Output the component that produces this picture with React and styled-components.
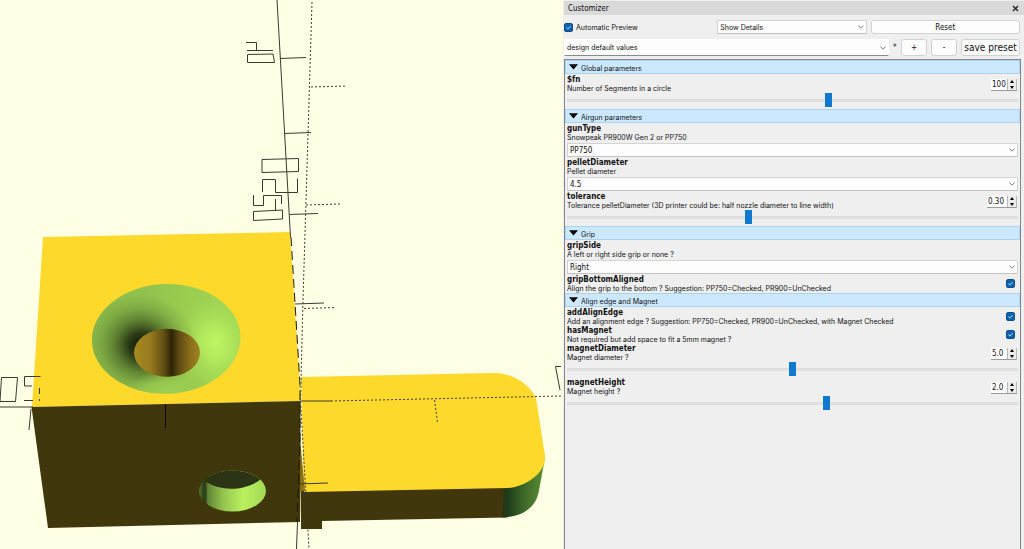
import React, { useState } from "react";
import styled, { createGlobalStyle } from "styled-components";

const groups = [
  {
    title: "Global parameters",
    params: [
      { name: "$fn", desc: "Number of Segments in a circle", type: "slider", value: 100, min: 1, max: 171, step: 1, digits: 0 },
    ],
  },
  {
    title: "Airgun parameters",
    params: [
      { name: "gunType", desc: "Snowpeak PR900W Gen 2 or PP750", type: "select", options: ["PP750", "PR900W"] },
      { name: "pelletDiameter", desc: "Pellet diameter", type: "select", options: ["4.5", "5.5", "6.35"] },
      {
        name: "tolerance",
        desc: "Tolerance pelletDiameter (3D printer could be: half nozzle diameter to line width)",
        type: "slider",
        value: 0.3,
        min: 0,
        max: 0.75,
        step: 0.01,
        digits: 2,
      },
    ],
  },
  {
    title: "Grip",
    params: [
      { name: "gripSide", desc: "A left or right side grip or none ?", type: "select", options: ["Right", "Left", "None"] },
      { name: "gripBottomAligned", desc: "Align the grip to the bottom ? Suggestion: PP750=Checked, PR900=UnChecked", type: "check" },
    ],
  },
  {
    title: "Align edge and Magnet",
    params: [
      { name: "addAlignEdge", desc: "Add an alignment edge ? Suggestion: PP750=Checked, PR900=UnChecked, with Magnet Checked", type: "check" },
      { name: "hasMagnet", desc: "Not required but add space to fit a 5mm magnet ?", type: "check" },
      { name: "magnetDiameter", desc: "Magnet diameter ?", type: "slider", value: 5, min: 0, max: 10, step: 0.1, digits: 1 },
      { name: "magnetHeight", desc: "Magnet height ?", type: "slider", value: 2, min: 0.5, max: 3.1, step: 0.1, digits: 1 },
    ],
  },
];

function Dropdown({ id, label, options, flat, small }) {
  return (
    <SelectWrap>
      <Select id={id} aria-label={label} $flat={flat} $small={small}>
        {options.map((o) => (
          <option key={o}>{o}</option>
        ))}
      </Select>
      <svg width="6" height="4" viewBox="0 0 6 4">
        <path d="M0.4 0.6L3 3.2L5.6 0.6" fill="none" stroke="#555" strokeWidth="0.8" />
      </svg>
    </SelectWrap>
  );
}

function Check({ id }) {
  const [on, setOn] = useState(true);
  return (
    <CheckWrap>
      <input id={id} type="checkbox" checked={on} onChange={(e) => setOn(e.target.checked)} />
      {on && (
        <svg width="9" height="9" viewBox="0 0 9 9">
          <path d="M2.4 4.6L3.9 6L6.7 3.2" fill="none" stroke="#d6ecff" strokeWidth="0.9" />
        </svg>
      )}
    </CheckWrap>
  );
}

function Param({ param }) {
  const { name, desc, type, min, max, step, digits } = param;
  const [value, setValue] = useState(param.value);
  const id = `param-${name}`;
  const change = (v) => setValue(Math.min(max, Math.max(min, Number(v) || 0)));

  return (
    <div>
      <ParamHead>
        <label htmlFor={id}>
          <strong>{name}</strong>
          <span>{desc}</span>
        </label>
        {type === "check" && (
          <CheckSlot>
            <Check id={id} />
          </CheckSlot>
        )}
        {type === "slider" && (
          <Spin $chars={value.toFixed(digits).length}>
            <input aria-label={`${name} value`} value={value.toFixed(digits)} onChange={(e) => change(e.target.value)} />
            <div>
              <button aria-label={`Increase ${name}`} onClick={() => change(value + step)}>
                <svg width="4" height="3" viewBox="0 0 4 3"><path d="M0 3L2 0L4 3Z" /></svg>
              </button>
              <button aria-label={`Decrease ${name}`} onClick={() => change(value - step)}>
                <svg width="4" height="3" viewBox="0 0 4 3"><path d="M0 0L2 3L4 0Z" /></svg>
              </button>
            </div>
          </Spin>
        )}
      </ParamHead>
      {type === "slider" && (
        <Slider id={id} type="range" min={min} max={max} step={step} value={value} onChange={(e) => change(e.target.value)} />
      )}
      {type === "select" && (
        <SelectRow>
          <Dropdown id={id} options={param.options} />
        </SelectRow>
      )}
    </div>
  );
}

function Group({ title, params }) {
  const [open, setOpen] = useState(true);
  return (
    <section>
      <GroupHeader aria-expanded={open} onClick={() => setOpen(!open)}>
        <svg width="9" height="6" viewBox="0 0 9 6"><path d="M0 0.3H9L4.5 5.5Z" /></svg>
        <span>{title}</span>
      </GroupHeader>
      {open && (
        <GroupBody>
          {params.map((p) => (
            <Param key={p.name} param={p} />
          ))}
        </GroupBody>
      )}
    </section>
  );
}

function Viewport() {
  return (
    <View>
      <svg viewBox="0 0 563 549" preserveAspectRatio="xMinYMin slice" role="img" aria-label="Model preview">
        <defs>
          <linearGradient id="cone" x1="0" y1="0" x2="1" y2="0.1">
            <stop offset="0" stopColor="#8aba4b" />
            <stop offset="0.4" stopColor="#93c34d" />
            <stop offset="1" stopColor="#a4d955" />
          </linearGradient>
          <radialGradient id="coneDark" gradientUnits="userSpaceOnUse" cx="0" cy="0" r="1" gradientTransform="translate(142 345) rotate(18) scale(56 52)">
            <stop offset="0" stopColor="#0d1405" />
            <stop offset="0.25" stopColor="#18220b" stopOpacity="0.85" />
            <stop offset="0.5" stopColor="#2c4017" stopOpacity="0.5" />
            <stop offset="0.75" stopColor="#3f5a20" stopOpacity="0.2" />
            <stop offset="1" stopColor="#4f7029" stopOpacity="0" />
          </radialGradient>
          <radialGradient id="coneLight" gradientUnits="userSpaceOnUse" cx="0" cy="0" r="1" gradientTransform="translate(215 344) rotate(-10) scale(38 46)">
            <stop offset="0" stopColor="#bdf763" />
            <stop offset="0.4" stopColor="#b4ec5e" stopOpacity="0.8" />
            <stop offset="1" stopColor="#a4d955" stopOpacity="0" />
          </radialGradient>
          {/* keeps the lower rim lit */}
          <radialGradient id="coneRim" gradientUnits="userSpaceOnUse" cx="0" cy="0" r="1" gradientTransform="translate(168 392) scale(50 20)">
            <stop offset="0" stopColor="#9bce52" />
            <stop offset="0.5" stopColor="#99cb51" stopOpacity="0.8" />
            <stop offset="1" stopColor="#93c34d" stopOpacity="0" />
          </radialGradient>
          <linearGradient id="bore">
            <stop offset="0" stopColor="#a88a20" />
            <stop offset="0.25" stopColor="#967a1e" />
            <stop offset="0.46" stopColor="#5e4c12" />
            <stop offset="0.57" stopColor="#2e2508" />
            <stop offset="0.68" stopColor="#5e4a12" />
            <stop offset="0.85" stopColor="#8a6e1b" />
            <stop offset="1" stopColor="#a18420" />
          </linearGradient>
          <linearGradient id="side">
            <stop offset="0" stopColor="#55782f" />
            <stop offset="0.07" stopColor="#2c3d17" />
            <stop offset="0.1" stopColor="#31451a" />
            <stop offset="0.13" stopColor="#5f8534" />
            <stop offset="0.35" stopColor="#93c34e" />
            <stop offset="0.65" stopColor="#b9f25f" />
            <stop offset="1" stopColor="#a2d655" />
          </linearGradient>
          <linearGradient id="corner">
            <stop offset="0" stopColor="#2a3312" />
            <stop offset="0.12" stopColor="#1d3a1a" />
            <stop offset="0.5" stopColor="#3c6827" />
            <stop offset="1" stopColor="#5c9036" />
          </linearGradient>
          <clipPath id="hole"><ellipse cx="232.5" cy="491" rx="33.5" ry="20.5" /></clipPath>
        </defs>

        {/* grip arm */}
        <path d="M300 445L304 491L508 487L507 517.5L322 521V529H301V522Z" fill="#41370d" />
        <path d="M504 486L545 458L538.5 493C535 508 522 517 502 517.5Z" fill="url(#corner)" />
        <path d="M301 377L492 373C512 372 530 385 536 398L545 456C546 474 524 487 508 488L304 492Z" fill="#fdd92c" />
        <path d="M300 438L305 491L300 491Z" fill="#8a7317" />

        {/* block */}
        <path d="M43 237L290 232L301 401L32 407Z" fill="#fdd92c" />
        <path d="M31.500 407L300.500 401L300 522L48 528Z" fill="#41370d" />

        {/* countersink */}
        <g transform="rotate(-2 166 339)">
          <ellipse cx="166.200" cy="338.800" rx="74.300" ry="54.800" fill="url(#cone)" />
          <ellipse cx="166.200" cy="338.800" rx="74.300" ry="54.800" fill="url(#coneLight)" />
          <ellipse cx="166.200" cy="338.800" rx="74.300" ry="54.800" fill="url(#coneDark)" />
          <ellipse cx="166.200" cy="338.800" rx="74.300" ry="54.800" fill="url(#coneRim)" />
        </g>
        <ellipse cx="167" cy="352.800" rx="33" ry="24" fill="url(#bore)" />

        {/* magnet hole */}
        <g clipPath="url(#hole)">
          <rect x="199" y="470" width="68" height="42" fill="url(#side)" />
          <path d="M205 465H267L261 479C246 491 220 492 205 481Z" fill="#2b3515" />
        </g>

        {/* axes */}
        <g fill="none" stroke="#3a3a30" strokeWidth="1">
          <path d="M277 0L290.500 237M280 58.500L306 57.500M284.500 133.500L311 132.500M289.500 214.500L318 213.500M295 304L324 303M298 484L328 483M297.500 522L296.500 549" />
          <path d="M291 237L300 385L300 440L297 522" strokeDasharray="9 5" stroke="#1c1904" />
          <path d="M0 407H33M31 409L29 430M300 401H331" />
          <path d="M165.500 404V428" stroke="#0c0a02" />
          <path d="M312 2L303 300L300.500 401L309 549M311 87L347 86M306 205L340 204M304 308.500L336 307.500M331 401L561 396M434.500 400L437.500 422M307 508.500L340 508" strokeDasharray="2 2" />
          <path d="M246 42.500H256.500V50.500M247 50.500H273M247.500 54.500L273 54L274.500 62.500H247.500Z" />
          <path d="M262 159.500L298.500 158.500V171.500L262 172.500ZM262.500 192V179.500H275.500V192.500H297.500V178.500M253.500 195V205.500H263.500V195.500H281.500V204M275.500 199V211M253.500 211.500L282.500 210V219L253.500 220.500Z" />
          <path d="M1.500 377.500H17.500L15.500 401.500H0L1.500 377.500M40.500 376.500H24.500V386H32M24 400.500H33M39.500 388V394M39.500 399V401" />
          <path d="M561 366.500H555.500L560 390" />
        </g>
      </svg>
    </View>
  );
}

export default function App() {
  return (
    <>
      <GlobalStyle />
      <Page>
        <Viewport />
        <Panel>
          <TitleBar>
            <h1>Customizer</h1>
            <button aria-label="Close">
              <svg width="7" height="7" viewBox="0 0 7 7"><path d="M1 1L6 6M6 1L1 6" stroke="#222" strokeWidth="1.300" /></svg>
            </button>
          </TitleBar>
          <TopRow>
            <CheckLabel>
              <Check id="auto-preview" />
              <label htmlFor="auto-preview">Automatic Preview</label>
            </CheckLabel>
            <Dropdown label="Description style" options={["Show Details", "Inline Details", "Hide Details"]} small />
            <Button>Reset</Button>
          </TopRow>
          <PresetRow>
            <Dropdown label="Preset" options={["design default values"]} flat small />
            <span>*</span>
            <Button $width="26px">+</Button>
            <Button $width="26px">-</Button>
            <Button $width="59px" $large>save preset</Button>
          </PresetRow>
          <Frame>
            {groups.map((g) => (
              <Group key={g.title} {...g} />
            ))}
          </Frame>
        </Panel>
      </Page>
    </>
  );
}

// Styles
const textFont = `"Inter", "Noto Sans", sans-serif`;

const GlobalStyle = createGlobalStyle`
  * {
    box-sizing: border-box;
  }

  body {
    margin: 0;
    background: #efefef;
  }

  body, button, input, select {
    font-family: "DejaVu Sans Condensed", "Noto Sans", sans-serif;
    font-size: 8px;
    line-height: 9px;
    color: #111;
  }
`;

const Page = styled.main`
  display: grid;
  grid-template-columns: 563fr 461fr;
  min-height: 100vh;
`;

const View = styled.section`
  background: #ffffe5;
  overflow: hidden;

  svg {
    display: block;
    width: 100%;
    height: 100%;
  }
`;

const Panel = styled.aside`
  display: flex;
  flex-direction: column;
  min-width: 0;
  padding: 1px 0 0 1px;
  background: #efefef;
`;

const TitleBar = styled.header`
  display: flex;
  align-items: center;
  justify-content: space-between;
  height: 14px;
  padding: 1px 5px 0 4px;
  background: #d9d9d9;

  h1 {
    margin: 0;
    font-size: 8px;
    font-weight: 400;
  }

  button {
    display: flex;
    padding: 0;
    border: 0;
    background: none;
  }
`;

const TopRow = styled.div`
  display: grid;
  grid-template-columns: 1fr 1fr 1fr;
  gap: 4px;
  height: 14px;
  margin: 5px 4px 5px 0;
`;

const PresetRow = styled.div`
  display: flex;
  align-items: stretch;
  gap: 4px;
  height: 17px;
  margin: 0 4px 3px 0;

  > span:not(:first-child) {
    align-self: center;
    width: 4px;
  }
`;

const CheckLabel = styled.div`
  display: flex;
  align-items: center;
  gap: 3px;
  font-family: ${textFont};
  font-size: 7px;
`;

const CheckWrap = styled.span`
  position: relative;
  flex: none;
  width: 9px;
  height: 9px;

  input {
    display: block;
    width: 9px;
    height: 9px;
    margin: 0;
    appearance: none;
    border: 1px solid #0b4f93;
    border-radius: 2px;
    background: #fff;
  }

  input:checked {
    background: #0f62ae;
  }

  svg {
    position: absolute;
    inset: 0;
    pointer-events: none;
  }
`;

const SelectWrap = styled.span`
  position: relative;
  display: flex;
  flex: 1;
  min-width: 0;

  svg {
    position: absolute;
    top: calc(50% - 2px);
    right: 3px;
    pointer-events: none;
  }
`;

const Select = styled.select`
  width: 100%;
  padding: 0 14px 0 2px;
  appearance: none;
  border: 1px solid ${(p) => (p.$flat ? "#fff" : "#d4d4d4")};
  border-bottom-color: ${(p) => (p.$flat ? "#8a8a8a" : "#c2c2c2")};
  border-radius: ${(p) => (p.$flat ? "0" : "1px")};
  background: #fdfdfd;
  ${(p) => p.$small && `font-family: ${textFont}; font-size: 7px;`}
`;

const Button = styled.button`
  width: ${(p) => p.$width || "auto"};
  padding: 0;
  border: 1px solid #d2d2d2;
  border-radius: 3px;
  background: #fdfdfd;
  font-size: ${(p) => (p.$large ? "10px" : "8px")};
  white-space: nowrap;
`;

const Frame = styled.div`
  flex: 1;
  margin-right: 3px;
  border: solid #828790;
  border-width: 1px 1px 0 1px;
`;

const GroupHeader = styled.button`
  display: flex;
  align-items: center;
  gap: 3px;
  width: 100%;
  height: 14px;
  padding: 0 3px;
  border: 1px solid #a9d3ee;
  background: #cce8ff;
  font-family: ${textFont};
  font-size: 7px;

  span {
    padding-top: 2px;
  }
`;

const GroupBody = styled.div`
  padding: 1px 2px 0;
`;

const ParamHead = styled.div`
  display: flex;
  align-items: center;
  justify-content: space-between;
  height: 18px;
  padding-right: 1px;

  label {
    display: flex;
    flex-direction: column;
    white-space: nowrap;
  }

  label span {
    font-family: ${textFont};
    font-size: 7px;
  }
`;

const CheckSlot = styled.div`
  padding: 0 2px 2px 0;
`;

const SelectRow = styled.div`
  display: flex;
  height: 16px;
  padding: 1px 0;
`;

const Spin = styled.div`
  display: flex;
  height: 12px;
  margin-top: 2px;
  border-bottom: 1px solid #9a9a9a;
  background: #fff;

  input {
    width: ${(p) => p.$chars * 4 + 4}px;
    padding: 0 1px;
    border: 0;
    background: none;
  }

  > div {
    display: flex;
    flex-direction: column;
    width: 10px;
  }

  button {
    display: flex;
    flex: 1;
    align-items: center;
    justify-content: center;
    padding: 0;
    border: solid #b8b8b8;
    border-width: 0 1px;
    background: #ececec;
  }
`;

const Slider = styled.input`
  display: block;
  width: 100%;
  height: 14px;
  margin: 0 0 2px;
  appearance: none;
  background: none;

  &::-webkit-slider-runnable-track {
    height: 3px;
    border: 1px solid #dcdcdc;
    background: #e4e4e4;
  }

  &::-webkit-slider-thumb {
    appearance: none;
    width: 7px;
    height: 14px;
    margin-top: -7px;
    background: #0f78d0;
  }
`;
